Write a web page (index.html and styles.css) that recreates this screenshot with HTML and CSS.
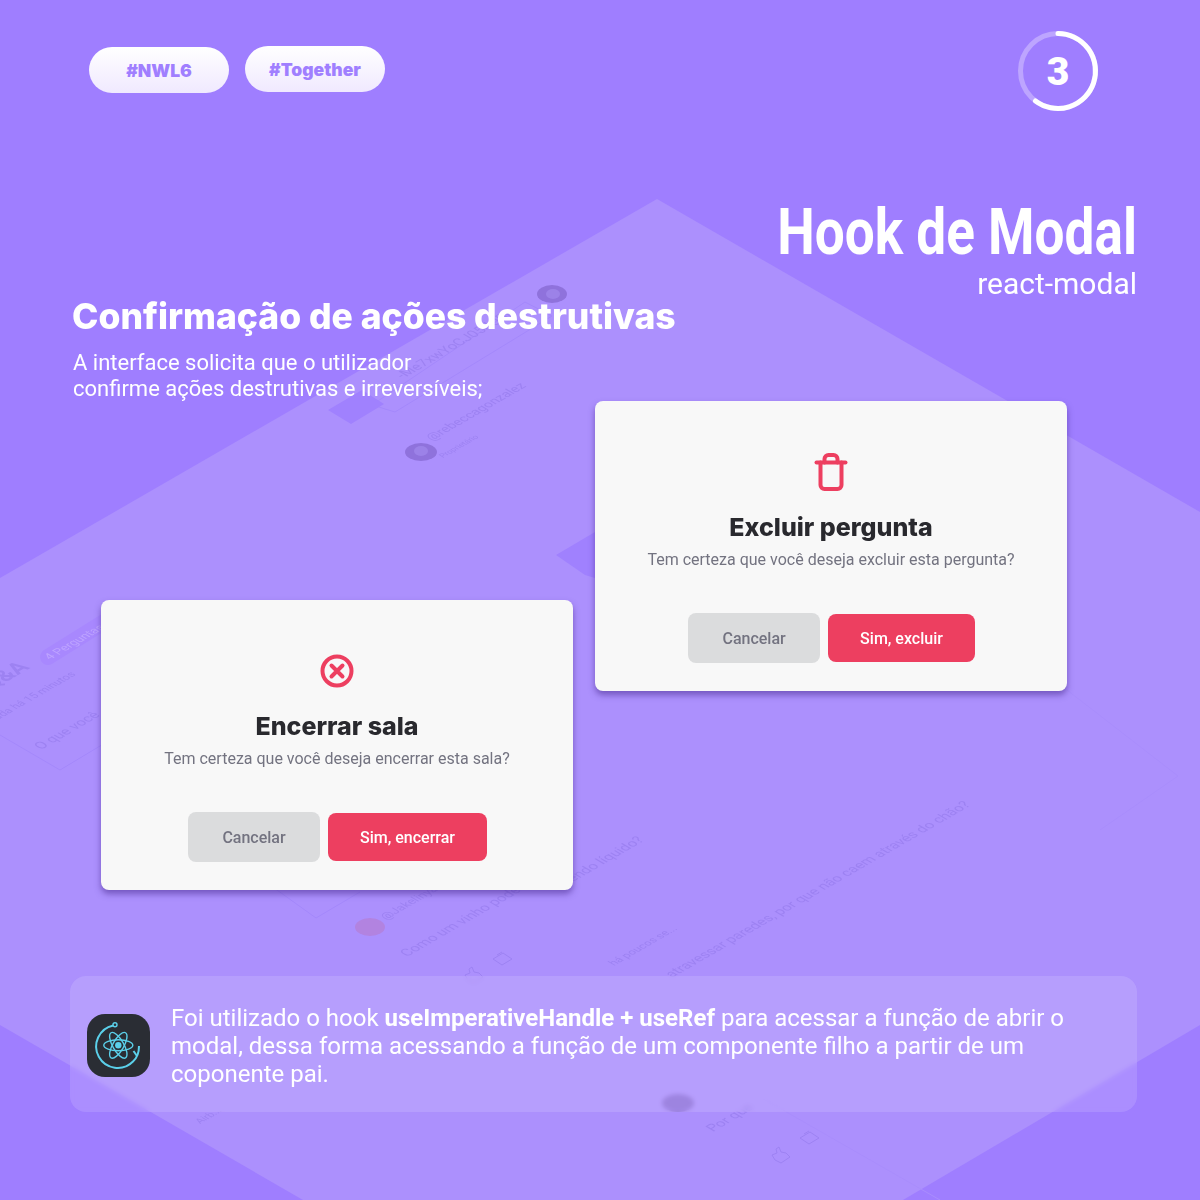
FILE: index.html
```html
<!DOCTYPE html>
<html lang="en">

<head>
    <meta charset="UTF-8">
    <meta name="viewport" content="width=device-width, initial-scale=1.0">
    <title>Hook de Modal</title>
    <link rel="stylesheet" href="styles.css">
</head>

<body>
    <div class="page">
        <!-- faded room screenshot behind the content -->
        <svg class="backdrop" width="1200" height="1200" viewBox="0 0 1200 1200">
            <polygon class="diamond" points="657,199 1200,512 1200,1025 903,1200 303,1200 0,1025 0,578"></polygon>

            <g class="ghost">
                <g class="ghost-lines">
                    <polygon points="372,405 525,302 552,316 395,412"></polygon>
                    <path d="M270 885L316 918L360 892"></path>
                    <path d="M0 735L60 770L110 740"></path>
                    <path class="faint" d="M1067 690L1178 776L1100 830"></path>
                    <path class="faint" d="M762 1098L940 1200"></path>
                </g>

                <polygon class="ghost-block" points="362,390 384,404 351,424 328,410"></polygon>
                <polygon class="ghost-block" points="595,532 595,578 585,575 556,555"></polygon>
                <path class="ghost-pill" d="M48 657L104 622"></path>

                <ellipse class="ghost-avatar" cx="552" cy="294" rx="15" ry="9"></ellipse>
                <ellipse class="ghost-avatar-mark" cx="553" cy="294" rx="7" ry="5"></ellipse>
                <ellipse class="ghost-avatar" cx="421" cy="452" rx="16" ry="9"></ellipse>
                <ellipse class="ghost-avatar-mark" cx="421" cy="451" rx="7" ry="5"></ellipse>
                <ellipse class="ghost-avatar pink" cx="370" cy="927" rx="15" ry="9"></ellipse>
                <ellipse class="ghost-avatar" cx="678" cy="1103" rx="16" ry="9"></ellipse>

                <g class="ghost-text">
                    <text transform="matrix(.866 -.5 .866 .5 403 379)" font-size="14">-Me7xwYoCJ05JQBj</text>
                    <text transform="matrix(.866 -.5 .866 .5 432 441)" font-size="13">@rebeccagonzalez</text>
                    <text transform="matrix(.866 -.5 .866 .5 443 458)" font-size="8">Proprietário</text>
                    <text transform="matrix(.866 -.5 .866 .5 -8 690)" font-size="22" font-weight="700">Q&amp;A</text>
                    <text class="on-pill" transform="matrix(.866 -.5 .866 .5 50 660)" font-size="12">4 Perguntas</text>
                    <text transform="matrix(.866 -.5 .866 .5 -2 720)" font-size="11">ada há 15 minutos</text>
                    <text transform="matrix(.866 -.5 .866 .5 41 750)" font-size="14">O que você</text>
                    <text transform="matrix(.866 -.5 .866 .5 407 957)" font-size="14">Como um vinho pode</text>
                    <text transform="matrix(.866 -.5 .866 .5 573 882)" font-size="14">endo líquido?</text>
                    <text transform="matrix(.866 -.5 .866 .5 386 920)" font-size="12">@Jakelinya</text>
                    <text transform="matrix(.866 -.5 .866 .5 614 966)" font-size="11">há poucos se...</text>
                    <text transform="matrix(.866 -.5 .866 .5 672 978)" font-size="14">atravessar paredes, por que não caem através do chão?</text>
                    <text transform="matrix(.866 -.5 .866 .5 713 1132)" font-size="14">Por que</text>
                    <text transform="matrix(.866 -.5 .866 .5 200 1124)" font-size="10">Airb...</text>
                </g>

                <g class="ghost-icons">
                    <path d="M465 975l3 5 6 3 9-6-4-4-5-1-2-5-3 2 1 4z"></path>
                    <path d="M493 959l10-6 9 6-10 6zM497 955l5-3"></path>
                    <path d="M772 1155l3 5 6 3 9-6-4-4-5-1-2-5-3 2 1 4z"></path>
                    <path d="M800 1138l10-6 9 6-10 6zM804 1134l5-3"></path>
                </g>
            </g>
        </svg>

        <header class="topbar">
            <div class="tags">
                <span class="tag">#NWL6</span>
                <span class="tag tag-raised">#Together</span>
            </div>
            <div class="step">
                <svg width="84" height="84" viewBox="0 0 84 84">
                    <circle class="step-track" cx="42" cy="42" r="37.5"></circle>
                    <path class="step-progress" d="M42 4.500A37.500 37.500 0 1 1 19.500 72"></path>
                </svg>
                <span class="step-number">3</span>
            </div>
        </header>

        <section class="title">
            <h1>Hook de Modal</h1>
            <p>react-modal</p>
        </section>

        <section class="intro">
            <h2>Confirmação de ações destrutivas</h2>
            <p>A interface solicita que o utilizador<br>confirme ações destrutivas e irreversíveis;</p>
        </section>

        <section class="modals">
            <div class="modal modal-lower">
                <svg class="modal-icon" width="40" height="40" viewBox="0 0 40 40">
                    <circle cx="20" cy="20" r="14.500"></circle>
                    <path d="M14.500 14.500l11 11M25.500 14.500l-11 11"></path>
                </svg>
                <h3>Encerrar sala</h3>
                <p>Tem certeza que você deseja encerrar esta sala?</p>
                <div class="modal-actions">
                    <button class="btn-cancel">Cancelar</button>
                    <button class="btn-confirm">Sim, encerrar</button>
                </div>
            </div>

            <div class="modal">
                <svg class="modal-icon" width="40" height="40" viewBox="0 0 40 40">
                    <path d="M5.500 10.500h29"></path>
                    <path d="M9.500 10.500V33a4 4 0 0 0 4 4h13a4 4 0 0 0 4-4V10.500"></path>
                    <path d="M13.500 10.500V7a4 4 0 0 1 4-4h5a4 4 0 0 1 4 4v3.500"></path>
                </svg>
                <h3>Excluir pergunta</h3>
                <p>Tem certeza que você deseja excluir esta pergunta?</p>
                <div class="modal-actions">
                    <button class="btn-cancel">Cancelar</button>
                    <button class="btn-confirm">Sim, excluir</button>
                </div>
            </div>
        </section>

        <footer class="note">
            <svg class="note-icon" width="63" height="63" viewBox="0 0 63 63">
                <rect width="63" height="63" rx="18" fill="#2a2d34"></rect>
                <g fill="none" stroke="#5bd0ea" stroke-width="1.400">
                    <ellipse cx="31.300" cy="31.300" rx="14.500" ry="5.500"></ellipse>
                    <ellipse cx="31.300" cy="31.300" rx="14.500" ry="5.500" transform="rotate(60 31.300 31.300)"></ellipse>
                    <ellipse cx="31.300" cy="31.300" rx="14.500" ry="5.500" transform="rotate(120 31.300 31.300)"></ellipse>
                    <circle cx="28" cy="10.700" r="2"></circle>
                    <path stroke-width="2" d="M26.200 11.400A21.500 21.500 0 1 0 46 47.500C50 44 52 38 52 32"></path>
                    <path stroke-width="2" d="M46.500 37L50 42"></path>
                </g>
                <circle cx="31.300" cy="31.300" r="3.200" fill="#5bd0ea"></circle>
            </svg>
            <p>Foi utilizado o hook <strong>useImperativeHandle + useRef</strong> para acessar a função de abrir o modal, dessa forma acessando a função de um componente filho a partir de um coponente pai.</p>
        </footer>
    </div>
</body>

</html>
```

FILE: styles.css
```css
body {
    margin: 0;
    font-family: Roboto, "Liberation Sans", sans-serif;
    color: white;
    background-color: #9f7eff;
}

.page {
    position: relative;
    width: 1200px;
    height: 1200px;
    overflow: hidden;
    background-color: #9f7eff;
}

.backdrop {
    position: absolute;
    top: 0;
    left: 0;
}

.diamond {
    fill: #ac90fd;
}

.ghost {
    filter: blur(0.4px);
}

.ghost-lines polygon,
.ghost-lines path {
    fill: none;
    stroke: #a488fb;
    stroke-width: 1;
}

.ghost-lines .faint {
    stroke: #a98dfc;
}

.ghost-block {
    fill: #a081fe;
}

.ghost-pill {
    fill: none;
    stroke: #a888fe;
    stroke-width: 16;
    stroke-linecap: round;
}

.ghost-avatar {
    fill: #8f72dc;
}

.ghost-avatar.pink {
    fill: #b283e0;
}

.ghost-avatar-mark {
    fill: #9c82e8;
}

.ghost-text text {
    font-family: Roboto, sans-serif;
    fill: #9d82f2;
}

.ghost-text .on-pill {
    fill: #bda3ff;
}

.ghost-icons path {
    fill: none;
    stroke: #9d82f2;
    stroke-width: 1;
}

.topbar {
    position: relative;
    display: flex;
    justify-content: space-between;
    align-items: flex-start;
    padding: 29px 100px 0 89px;
    height: 90px;
}

.tags {
    display: flex;
    gap: 16px;
    margin-top: 18px;
}

.tag {
    width: 140px;
    height: 46px;
    box-sizing: border-box;
    padding-top: 1px;
    display: flex;
    align-items: center;
    justify-content: center;
    border-radius: 23px;
    background: linear-gradient(180deg, #ffffff, #f0e9ff);
    color: #a07fff;
    font-family: Inter, sans-serif;
    font-size: 17.500px;
    font-weight: 900;
}

.tag-raised {
    margin-top: -1px;
}

.step {
    position: relative;
    width: 84px;
    height: 84px;
    display: flex;
    align-items: center;
    justify-content: center;
}

.step svg {
    position: absolute;
    top: 0;
    left: 0;
    fill: none;
    stroke-width: 5;
    stroke-linecap: round;
}

.step-track {
    stroke: #bda5ff;
}

.step-progress {
    stroke: white;
}

.step-number {
    padding-top: 3px;
    font-size: 39px;
    font-weight: 900;
    line-height: 1;
}

.title {
    position: relative;
    text-align: right;
    padding-right: 63px;
    margin-top: 78px;
}

.title h1 {
    margin: 0;
    font-size: 64px;
    line-height: 72px;
    font-weight: 700;
    transform: scaleX(0.83);
    transform-origin: right center;
}

.title p {
    margin: 0;
    font-size: 30px;
    line-height: 30px;
    font-weight: 400;
}

.intro {
    position: relative;
    height: 107px;
    padding-left: 72px;
    margin-top: -5px;
}

.intro h2 {
    margin: 0 0 10px;
    font-family: Inter, sans-serif;
    font-size: 35.500px;
    line-height: 46px;
    font-weight: 800;
}

.intro p {
    margin: 0 0 0 1px;
    font-size: 22px;
    line-height: 26px;
    font-weight: 400;
}

.modals {
    position: relative;
    display: grid;
    grid-template-columns: 472px 472px;
    column-gap: 22px;
    align-items: start;
    padding-left: 101px;
}

.modal {
    height: 290px;
    box-sizing: border-box;
    padding-top: 51px;
    background-color: #f8f8f8;
    border-radius: 8px;
    box-shadow: 0 4px 6px rgba(60, 30, 130, 0.5);
    text-align: center;
}

.modal-lower {
    margin-top: 199px;
}

.modal-icon {
    display: block;
    margin: 0 auto;
    fill: none;
    stroke: #ed3f60;
    stroke-width: 4;
    stroke-linecap: round;
    stroke-linejoin: round;
}

.modal h3 {
    margin: 19px 0 0;
    font-family: Inter, sans-serif;
    font-size: 25px;
    line-height: 32px;
    font-weight: 800;
    color: #29292e;
}

.modal p {
    margin: 5px 0 0;
    font-size: 16px;
    line-height: 24px;
    color: #737380;
}

.modal-actions {
    display: flex;
    justify-content: center;
    align-items: center;
    gap: 8px;
    margin-top: 41px;
    padding-left: 1px;
}

.modal-actions button {
    font-family: Roboto, sans-serif;
    font-size: 16px;
    font-weight: 500;
    border: none;
    border-radius: 8px;
    cursor: pointer;
}

.btn-cancel {
    width: 132px;
    height: 50px;
    background-color: #dbdcdd;
    color: #737380;
}

.btn-confirm {
    height: 48px;
    padding: 0 32px;
    background-color: #ed3f60;
    color: white;
}

.note {
    position: absolute;
    left: 70px;
    top: 976px;
    width: 1067px;
    height: 136px;
    box-sizing: border-box;
    display: flex;
    align-items: center;
    gap: 21px;
    padding: 4px 40px 0 17px;
    background-color: rgba(255, 255, 255, 0.13);
    backdrop-filter: blur(2px);
    border-radius: 16px;
}

.note-icon {
    flex-shrink: 0;
    margin-bottom: 1px;
}

.note p {
    margin: 0;
    font-size: 24px;
    line-height: 28px;
    font-weight: 400;
}

.note strong {
    font-weight: 700;
}
```
